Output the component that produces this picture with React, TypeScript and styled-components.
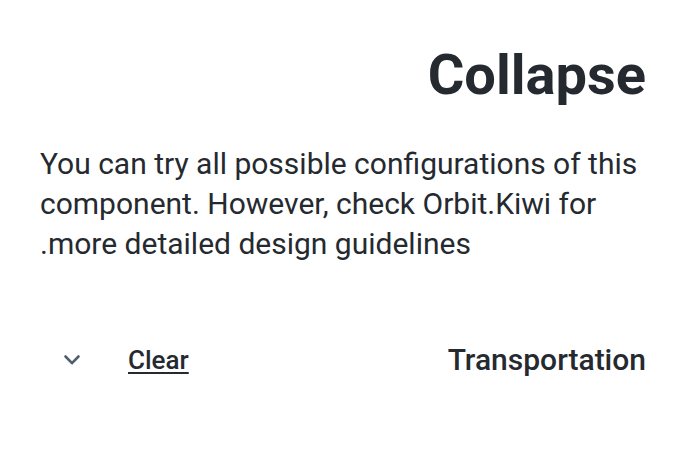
import React, { useState } from "react";
import styled, { createGlobalStyle } from "styled-components";

const GlobalStyle = createGlobalStyle`
  *, *::before, *::after { box-sizing: border-box; }
  body {
    margin: 0;
    background: #fff;
    color: #252a31;
    font-family: Roboto, sans-serif;
  }
`;

const Page = styled.main`
  display: flex;
  flex-direction: column;
  padding: 40px;
`;

const Title = styled.h1`
  margin: 0;
  font-size: 56px;
  line-height: 70px;
  font-weight: 700;
`;

const Description = styled.p`
  margin: 34px 0 0;
  font-size: 30px;
  line-height: 40px;
  text-align: left;
`;

const CollapseHeader = styled.div`
  display: flex;
  align-items: center;
  justify-content: space-between;
  margin-top: 64px;
`;

const Label = styled.h4`
  margin: 0;
  font-size: 30px;
  line-height: 40px;
  font-weight: 500;
`;

const Actions = styled.div`
  display: flex;
  align-items: center;
  gap: 24px;
`;

const ClearLink = styled.a`
  color: inherit;
  font-size: 26px;
  line-height: 42px;
  font-weight: 500;
  text-decoration: underline;
  text-decoration-thickness: 2px;
  text-underline-offset: 3px;
`;

const ToggleButton = styled.button`
  display: flex;
  align-items: center;
  justify-content: center;
  width: 64px;
  height: 64px;
  padding: 0;
  border: 0;
  background: transparent;
  color: #4f5e71;
  cursor: pointer;
`;

const Chevron = styled.svg<{ $open: boolean }>`
  width: 32px;
  height: 32px;
  transform: ${({ $open }) => ($open ? "rotate(180deg)" : "none")};
`;

export default function App() {
  const [open, setOpen] = useState(false);
  return (
    <>
      <GlobalStyle />
      <Page dir="rtl">
        <Title>Collapse</Title>
        <Description>
          You can try all possible configurations of this component. However,
          check Orbit.Kiwi for more detailed design guidelines.
        </Description>
        <CollapseHeader>
          <Label id="transportation">Transportation</Label>
          <Actions>
            <ClearLink href="#clear">Clear</ClearLink>
            <ToggleButton
              type="button"
              aria-labelledby="transportation"
              aria-expanded={open}
              onClick={() => setOpen(!open)}
            >
              <Chevron $open={open} viewBox="0 0 32 32" fill="none" aria-hidden="true">
                <path d="M9.5 12.5L16 19.2l6.500-6.700" stroke="currentColor" strokeWidth="2.600" strokeLinecap="round" strokeLinejoin="round" />
              </Chevron>
            </ToggleButton>
          </Actions>
        </CollapseHeader>
      </Page>
    </>
  );
}
